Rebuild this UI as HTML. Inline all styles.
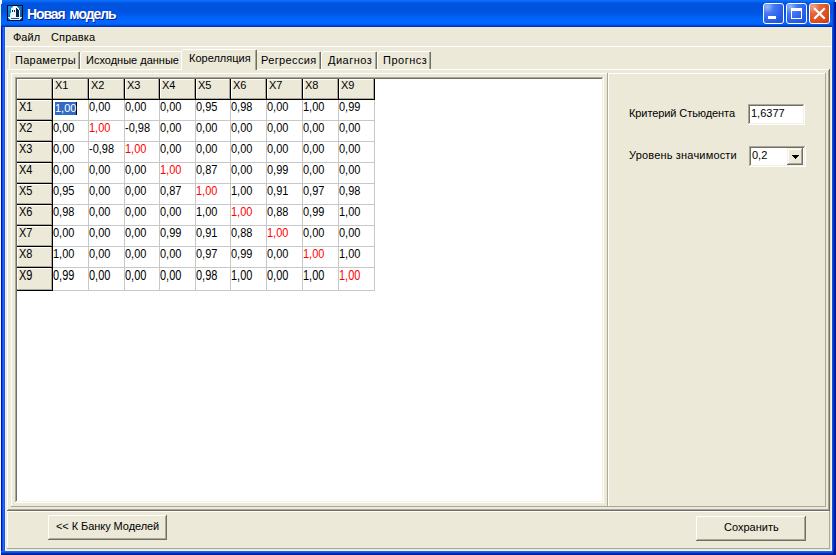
<!DOCTYPE html>
<html><head><meta charset="utf-8"><style>
html,body{margin:0;padding:0;}
body{width:836px;height:555px;position:relative;overflow:hidden;background:#fff;}
div{position:absolute;}
.t{font:11px "Liberation Sans",sans-serif;line-height:13px;color:#000;white-space:pre;}
</style></head><body>
<div style="left:1px;top:0px;width:835px;height:27px;background:linear-gradient(to bottom,#0C72FA 0px,#0A6CF6 1px,#0460EE 2px,#0056E4 3px,#0053DF 5px,#0053DF 11px,#0058E8 14px,#0060F6 17px,#0066FF 20px,#0066FF 23px,#0062FA 24px,#0058EE 25px,#0036BC 26px,#002EAC 27px)"></div>
<div style="left:0px;top:0px;width:2px;height:4px;background:#F4F7FE"></div>
<div style="left:835px;top:0px;width:1px;height:2px;background:#F4F7FE"></div>
<div style="left:0px;top:4px;width:1px;height:551px;background:#F4F7FE"></div>
<div style="left:1px;top:27px;width:4px;height:528px;background:linear-gradient(to right,#0010D8 0px,#0010D8 1px,#0A48EC 1px,#0A48EC 2px,#1A70FA 2px,#1A70FA 3px,#0A58F0 3px,#0A58F0 4px)"></div>
<div style="left:1px;top:551px;width:835px;height:4px;background:linear-gradient(to bottom,#1464FA 0px,#1464FA 1px,#0850EE 1px,#0850EE 2px,#0030B8 2px,#001C90 4px)"></div>
<div style="left:832px;top:2px;width:4px;height:549px;background:linear-gradient(to right,#0852F0 0px,#0852F0 1px,#0040D0 1px,#0040D0 2px,#001EA0 2px,#001490 4px)"></div>
<div style="left:833px;top:551px;width:3px;height:4px;background:#001890"></div>
<div style="left:5px;top:27px;width:827px;height:524px;background:#ECE9D8"></div>
<div style="left:5px;top:27px;width:1px;height:524px;background:#F8F0D8"></div>
<div style="left:831px;top:27px;width:1px;height:524px;background:#FBF4DC"></div>
<div style="left:5px;top:550px;width:827px;height:1px;background:#FBF4DC"></div>
<svg style="position:absolute;left:7px;top:5px" width="16" height="16" viewBox="0 0 16 16" shape-rendering="crispEdges">
<defs><linearGradient id="ig" x1="0" y1="0" x2="1" y2="1"><stop offset="0" stop-color="#13A0EA"/><stop offset="0.6" stop-color="#0A6CB4"/><stop offset="1" stop-color="#034A80"/></linearGradient></defs>
<rect x="0" y="0" width="16" height="16" fill="#000A14"/>
<rect x="1" y="1" width="14" height="14" fill="url(#ig)"/>
<rect x="4" y="3" width="5" height="10" fill="#F2F6FA"/>
<rect x="3" y="8" width="1" height="5" fill="#DCE6EE"/>
<rect x="6" y="1" width="3" height="2" fill="#F6FAFE"/>
<rect x="5" y="2" width="1" height="1" fill="#C8DCEC"/>
<rect x="9" y="1" width="1" height="2" fill="#F6FAFE"/>
<rect x="9" y="3" width="3" height="9" fill="#04264A"/>
<rect x="10" y="2" width="1" height="2" fill="#E8F2FA"/>
<rect x="11" y="3" width="1" height="2" fill="#E8F2FA"/>
<rect x="12" y="5" width="1" height="7" fill="#E8F2FA"/>
<rect x="5" y="5" width="1" height="2" fill="#18283A"/><rect x="7" y="5" width="1" height="2" fill="#18283A"/>
<rect x="1" y="12" width="14" height="1" fill="#EEF4FA"/>
<rect x="2" y="13" width="2" height="1" fill="#EEF4FA"/>
<rect x="4" y="13" width="8" height="1" fill="#0A5A98"/>
<rect x="12" y="13" width="2" height="1" fill="#EEF4FA"/>
<rect x="3" y="14" width="10" height="1" fill="#EEF4FA"/>
</svg>
<div class="t" style="left:27px;top:6px;font:bold 14px 'Liberation Sans',sans-serif;line-height:16px;color:#fff;letter-spacing:-1.1px;word-spacing:2px;text-shadow:1px 1px 0 #0A1E8C">Новая модель</div>
<div style="left:763px;top:3px;width:21px;height:21px;background:radial-gradient(circle at 18% 15%,#9DB9FA 0%,#4677F2 30%,#2A5FEA 65%,#1C4CD8 100%);border:1px solid #fff;box-sizing:border-box;border-radius:3px"></div>
<div style="left:786px;top:3px;width:21px;height:21px;background:radial-gradient(circle at 18% 15%,#9DB9FA 0%,#4677F2 30%,#2A5FEA 65%,#1C4CD8 100%);border:1px solid #fff;box-sizing:border-box;border-radius:3px"></div>
<div style="left:809px;top:3px;width:21px;height:21px;background:radial-gradient(circle at 18% 15%,#F4A886 0%,#E6643A 30%,#DD4E20 65%,#C23C12 100%);border:1px solid #fff;box-sizing:border-box;border-radius:3px"></div>
<div style="left:768px;top:16px;width:8px;height:3px;background:#fff"></div>
<div style="left:791px;top:8px;width:11px;height:11px;border:1px solid #fff;border-top-width:3px;box-sizing:border-box"></div>
<svg style="position:absolute;left:809px;top:3px" width="21" height="21"><path d="M6 6L15 15M15 6L6 15" stroke="#fff" stroke-width="2.2" stroke-linecap="square"/></svg>
<div class="t" style="left:13px;top:31px;">Файл</div>
<div class="t" style="left:51px;top:31px;letter-spacing:0.15px">Справка</div>
<div style="left:5px;top:46px;width:827px;height:1px;background:#FFFFFF"></div>
<div style="left:7px;top:69px;width:823px;height:1px;background:#FFFFFF"></div>
<div style="left:7px;top:69px;width:1px;height:442px;background:#FFFFFF"></div>
<div style="left:828px;top:70px;width:1px;height:440px;background:#ACA899"></div>
<div style="left:829px;top:69px;width:1px;height:442px;background:#716F64"></div>
<div style="left:8px;top:509px;width:821px;height:1px;background:#ACA899"></div>
<div style="left:7px;top:510px;width:823px;height:1px;background:#716F64"></div>
<div style="left:10px;top:52px;width:69px;height:17px;background:#ECE9D8"></div>
<div style="left:11px;top:51px;width:68px;height:1px;background:#FFFFFF"></div>
<div style="left:10px;top:52px;width:1px;height:1px;background:#FFFFFF"></div>
<div style="left:9px;top:53px;width:1px;height:16px;background:#FFFFFF"></div>
<div style="left:78px;top:52px;width:1px;height:17px;background:#ACA899"></div>
<div style="left:79px;top:52px;width:1px;height:17px;background:#716F64"></div>
<div class="t" style="left:15px;top:54px;letter-spacing:0.25px">Параметры</div>
<div style="left:81px;top:52px;width:101px;height:17px;background:#ECE9D8"></div>
<div style="left:82px;top:51px;width:100px;height:1px;background:#FFFFFF"></div>
<div style="left:81px;top:52px;width:1px;height:1px;background:#FFFFFF"></div>
<div style="left:80px;top:53px;width:1px;height:16px;background:#FFFFFF"></div>
<div style="left:181px;top:52px;width:1px;height:17px;background:#ACA899"></div>
<div style="left:182px;top:52px;width:1px;height:17px;background:#716F64"></div>
<div class="t" style="left:86px;top:54px;letter-spacing:0px">Исходные данные</div>
<div style="left:255px;top:52px;width:65px;height:17px;background:#ECE9D8"></div>
<div style="left:256px;top:51px;width:64px;height:1px;background:#FFFFFF"></div>
<div style="left:255px;top:52px;width:1px;height:1px;background:#FFFFFF"></div>
<div style="left:254px;top:53px;width:1px;height:16px;background:#FFFFFF"></div>
<div style="left:319px;top:52px;width:1px;height:17px;background:#ACA899"></div>
<div style="left:320px;top:52px;width:1px;height:17px;background:#716F64"></div>
<div class="t" style="left:261px;top:54px;letter-spacing:0.375px">Регрессия</div>
<div style="left:322px;top:52px;width:54px;height:17px;background:#ECE9D8"></div>
<div style="left:323px;top:51px;width:53px;height:1px;background:#FFFFFF"></div>
<div style="left:322px;top:52px;width:1px;height:1px;background:#FFFFFF"></div>
<div style="left:321px;top:53px;width:1px;height:16px;background:#FFFFFF"></div>
<div style="left:375px;top:52px;width:1px;height:17px;background:#ACA899"></div>
<div style="left:376px;top:52px;width:1px;height:17px;background:#716F64"></div>
<div class="t" style="left:328px;top:54px;letter-spacing:0.5px">Диагноз</div>
<div style="left:378px;top:52px;width:52px;height:17px;background:#ECE9D8"></div>
<div style="left:379px;top:51px;width:51px;height:1px;background:#FFFFFF"></div>
<div style="left:378px;top:52px;width:1px;height:1px;background:#FFFFFF"></div>
<div style="left:377px;top:53px;width:1px;height:16px;background:#FFFFFF"></div>
<div style="left:429px;top:52px;width:1px;height:17px;background:#ACA899"></div>
<div style="left:430px;top:52px;width:1px;height:17px;background:#716F64"></div>
<div class="t" style="left:383px;top:54px;letter-spacing:0.5px">Прогнсз</div>
<div style="left:182px;top:50px;width:74px;height:20px;background:#ECE9D8"></div>
<div style="left:183px;top:49px;width:73px;height:1px;background:#FFFFFF"></div>
<div style="left:182px;top:50px;width:1px;height:1px;background:#FFFFFF"></div>
<div style="left:181px;top:51px;width:1px;height:19px;background:#FFFFFF"></div>
<div style="left:255px;top:50px;width:1px;height:20px;background:#ACA899"></div>
<div style="left:256px;top:50px;width:1px;height:20px;background:#716F64"></div>
<div class="t" style="left:189px;top:52px;letter-spacing:0px">Корелляция</div>
<div style="left:182px;top:69px;width:73px;height:1px;background:#ECE9D8"></div>
<div style="left:11px;top:73px;width:597px;height:1px;background:#FFFFFF"></div>
<div style="left:11px;top:73px;width:1px;height:434px;background:#FFFFFF"></div>
<div style="left:11px;top:506px;width:597px;height:1px;background:#ACA899"></div>
<div style="left:607px;top:73px;width:1px;height:434px;background:#ACA899"></div>
<div style="left:608px;top:73px;width:218px;height:1px;background:#FFFFFF"></div>
<div style="left:608px;top:73px;width:1px;height:434px;background:#FFFFFF"></div>
<div style="left:608px;top:506px;width:218px;height:1px;background:#ACA899"></div>
<div style="left:825px;top:73px;width:1px;height:434px;background:#ACA899"></div>
<div style="left:15px;top:77px;width:589px;height:1px;background:#ACA899"></div>
<div style="left:15px;top:77px;width:1px;height:426px;background:#ACA899"></div>
<div style="left:16px;top:78px;width:587px;height:1px;background:#716F64"></div>
<div style="left:16px;top:78px;width:1px;height:424px;background:#716F64"></div>
<div style="left:16px;top:501px;width:587px;height:1px;background:#F1EFE2"></div>
<div style="left:602px;top:78px;width:1px;height:424px;background:#F1EFE2"></div>
<div style="left:15px;top:502px;width:589px;height:1px;background:#FFFFFF"></div>
<div style="left:603px;top:77px;width:1px;height:426px;background:#FFFFFF"></div>
<div style="left:17px;top:79px;width:585px;height:422px;background:#fff"></div>
<div style="left:53px;top:120px;width:322px;height:1px;background:#C8C8C8"></div>
<div style="left:53px;top:141px;width:322px;height:1px;background:#C8C8C8"></div>
<div style="left:53px;top:162px;width:322px;height:1px;background:#C8C8C8"></div>
<div style="left:53px;top:183px;width:322px;height:1px;background:#C8C8C8"></div>
<div style="left:53px;top:204px;width:322px;height:1px;background:#C8C8C8"></div>
<div style="left:53px;top:225px;width:322px;height:1px;background:#C8C8C8"></div>
<div style="left:53px;top:246px;width:322px;height:1px;background:#C8C8C8"></div>
<div style="left:53px;top:267px;width:322px;height:1px;background:#C8C8C8"></div>
<div style="left:53px;top:290px;width:322px;height:1px;background:#C8C8C8"></div>
<div style="left:88px;top:100px;width:1px;height:191px;background:#C8C8C8"></div>
<div style="left:124px;top:100px;width:1px;height:191px;background:#C8C8C8"></div>
<div style="left:159px;top:100px;width:1px;height:191px;background:#C8C8C8"></div>
<div style="left:195px;top:100px;width:1px;height:191px;background:#C8C8C8"></div>
<div style="left:230px;top:100px;width:1px;height:191px;background:#C8C8C8"></div>
<div style="left:266px;top:100px;width:1px;height:191px;background:#C8C8C8"></div>
<div style="left:302px;top:100px;width:1px;height:191px;background:#C8C8C8"></div>
<div style="left:338px;top:100px;width:1px;height:191px;background:#C8C8C8"></div>
<div style="left:374px;top:100px;width:1px;height:191px;background:#C8C8C8"></div>
<div style="left:17px;top:79px;width:35px;height:20px;background:#ECE9D8"></div>
<div style="left:17px;top:79px;width:35px;height:1px;background:#FFFFFF"></div>
<div style="left:17px;top:79px;width:1px;height:20px;background:#FFFFFF"></div>
<div style="left:17px;top:98px;width:35px;height:1px;background:#ACA899"></div>
<div style="left:51px;top:79px;width:1px;height:20px;background:#ACA899"></div>
<div style="left:53px;top:79px;width:35px;height:20px;background:#ECE9D8"></div>
<div style="left:53px;top:79px;width:35px;height:1px;background:#FFFFFF"></div>
<div style="left:53px;top:79px;width:1px;height:20px;background:#FFFFFF"></div>
<div style="left:53px;top:98px;width:35px;height:1px;background:#ACA899"></div>
<div style="left:87px;top:79px;width:1px;height:20px;background:#ACA899"></div>
<div style="left:89px;top:79px;width:35px;height:20px;background:#ECE9D8"></div>
<div style="left:89px;top:79px;width:35px;height:1px;background:#FFFFFF"></div>
<div style="left:89px;top:79px;width:1px;height:20px;background:#FFFFFF"></div>
<div style="left:89px;top:98px;width:35px;height:1px;background:#ACA899"></div>
<div style="left:123px;top:79px;width:1px;height:20px;background:#ACA899"></div>
<div style="left:125px;top:79px;width:34px;height:20px;background:#ECE9D8"></div>
<div style="left:125px;top:79px;width:34px;height:1px;background:#FFFFFF"></div>
<div style="left:125px;top:79px;width:1px;height:20px;background:#FFFFFF"></div>
<div style="left:125px;top:98px;width:34px;height:1px;background:#ACA899"></div>
<div style="left:158px;top:79px;width:1px;height:20px;background:#ACA899"></div>
<div style="left:160px;top:79px;width:35px;height:20px;background:#ECE9D8"></div>
<div style="left:160px;top:79px;width:35px;height:1px;background:#FFFFFF"></div>
<div style="left:160px;top:79px;width:1px;height:20px;background:#FFFFFF"></div>
<div style="left:160px;top:98px;width:35px;height:1px;background:#ACA899"></div>
<div style="left:194px;top:79px;width:1px;height:20px;background:#ACA899"></div>
<div style="left:196px;top:79px;width:34px;height:20px;background:#ECE9D8"></div>
<div style="left:196px;top:79px;width:34px;height:1px;background:#FFFFFF"></div>
<div style="left:196px;top:79px;width:1px;height:20px;background:#FFFFFF"></div>
<div style="left:196px;top:98px;width:34px;height:1px;background:#ACA899"></div>
<div style="left:229px;top:79px;width:1px;height:20px;background:#ACA899"></div>
<div style="left:231px;top:79px;width:35px;height:20px;background:#ECE9D8"></div>
<div style="left:231px;top:79px;width:35px;height:1px;background:#FFFFFF"></div>
<div style="left:231px;top:79px;width:1px;height:20px;background:#FFFFFF"></div>
<div style="left:231px;top:98px;width:35px;height:1px;background:#ACA899"></div>
<div style="left:265px;top:79px;width:1px;height:20px;background:#ACA899"></div>
<div style="left:267px;top:79px;width:35px;height:20px;background:#ECE9D8"></div>
<div style="left:267px;top:79px;width:35px;height:1px;background:#FFFFFF"></div>
<div style="left:267px;top:79px;width:1px;height:20px;background:#FFFFFF"></div>
<div style="left:267px;top:98px;width:35px;height:1px;background:#ACA899"></div>
<div style="left:301px;top:79px;width:1px;height:20px;background:#ACA899"></div>
<div style="left:303px;top:79px;width:35px;height:20px;background:#ECE9D8"></div>
<div style="left:303px;top:79px;width:35px;height:1px;background:#FFFFFF"></div>
<div style="left:303px;top:79px;width:1px;height:20px;background:#FFFFFF"></div>
<div style="left:303px;top:98px;width:35px;height:1px;background:#ACA899"></div>
<div style="left:337px;top:79px;width:1px;height:20px;background:#ACA899"></div>
<div style="left:339px;top:79px;width:35px;height:20px;background:#ECE9D8"></div>
<div style="left:339px;top:79px;width:35px;height:1px;background:#FFFFFF"></div>
<div style="left:339px;top:79px;width:1px;height:20px;background:#FFFFFF"></div>
<div style="left:339px;top:98px;width:35px;height:1px;background:#ACA899"></div>
<div style="left:373px;top:79px;width:1px;height:20px;background:#ACA899"></div>
<div style="left:17px;top:100px;width:35px;height:20px;background:#ECE9D8"></div>
<div style="left:17px;top:100px;width:35px;height:1px;background:#FFFFFF"></div>
<div style="left:17px;top:100px;width:1px;height:20px;background:#FFFFFF"></div>
<div style="left:17px;top:119px;width:35px;height:1px;background:#ACA899"></div>
<div style="left:51px;top:100px;width:1px;height:20px;background:#ACA899"></div>
<div style="left:17px;top:121px;width:35px;height:20px;background:#ECE9D8"></div>
<div style="left:17px;top:121px;width:35px;height:1px;background:#FFFFFF"></div>
<div style="left:17px;top:121px;width:1px;height:20px;background:#FFFFFF"></div>
<div style="left:17px;top:140px;width:35px;height:1px;background:#ACA899"></div>
<div style="left:51px;top:121px;width:1px;height:20px;background:#ACA899"></div>
<div style="left:17px;top:142px;width:35px;height:20px;background:#ECE9D8"></div>
<div style="left:17px;top:142px;width:35px;height:1px;background:#FFFFFF"></div>
<div style="left:17px;top:142px;width:1px;height:20px;background:#FFFFFF"></div>
<div style="left:17px;top:161px;width:35px;height:1px;background:#ACA899"></div>
<div style="left:51px;top:142px;width:1px;height:20px;background:#ACA899"></div>
<div style="left:17px;top:163px;width:35px;height:20px;background:#ECE9D8"></div>
<div style="left:17px;top:163px;width:35px;height:1px;background:#FFFFFF"></div>
<div style="left:17px;top:163px;width:1px;height:20px;background:#FFFFFF"></div>
<div style="left:17px;top:182px;width:35px;height:1px;background:#ACA899"></div>
<div style="left:51px;top:163px;width:1px;height:20px;background:#ACA899"></div>
<div style="left:17px;top:184px;width:35px;height:20px;background:#ECE9D8"></div>
<div style="left:17px;top:184px;width:35px;height:1px;background:#FFFFFF"></div>
<div style="left:17px;top:184px;width:1px;height:20px;background:#FFFFFF"></div>
<div style="left:17px;top:203px;width:35px;height:1px;background:#ACA899"></div>
<div style="left:51px;top:184px;width:1px;height:20px;background:#ACA899"></div>
<div style="left:17px;top:205px;width:35px;height:20px;background:#ECE9D8"></div>
<div style="left:17px;top:205px;width:35px;height:1px;background:#FFFFFF"></div>
<div style="left:17px;top:205px;width:1px;height:20px;background:#FFFFFF"></div>
<div style="left:17px;top:224px;width:35px;height:1px;background:#ACA899"></div>
<div style="left:51px;top:205px;width:1px;height:20px;background:#ACA899"></div>
<div style="left:17px;top:226px;width:35px;height:20px;background:#ECE9D8"></div>
<div style="left:17px;top:226px;width:35px;height:1px;background:#FFFFFF"></div>
<div style="left:17px;top:226px;width:1px;height:20px;background:#FFFFFF"></div>
<div style="left:17px;top:245px;width:35px;height:1px;background:#ACA899"></div>
<div style="left:51px;top:226px;width:1px;height:20px;background:#ACA899"></div>
<div style="left:17px;top:247px;width:35px;height:20px;background:#ECE9D8"></div>
<div style="left:17px;top:247px;width:35px;height:1px;background:#FFFFFF"></div>
<div style="left:17px;top:247px;width:1px;height:20px;background:#FFFFFF"></div>
<div style="left:17px;top:266px;width:35px;height:1px;background:#ACA899"></div>
<div style="left:51px;top:247px;width:1px;height:20px;background:#ACA899"></div>
<div style="left:17px;top:268px;width:35px;height:22px;background:#ECE9D8"></div>
<div style="left:17px;top:268px;width:35px;height:1px;background:#FFFFFF"></div>
<div style="left:17px;top:268px;width:1px;height:22px;background:#FFFFFF"></div>
<div style="left:17px;top:289px;width:35px;height:1px;background:#ACA899"></div>
<div style="left:51px;top:268px;width:1px;height:22px;background:#ACA899"></div>
<div style="left:17px;top:99px;width:358px;height:1px;background:#000"></div>
<div style="left:52px;top:79px;width:1px;height:212px;background:#000"></div>
<div style="left:88px;top:79px;width:1px;height:21px;background:#000"></div>
<div style="left:124px;top:79px;width:1px;height:21px;background:#000"></div>
<div style="left:159px;top:79px;width:1px;height:21px;background:#000"></div>
<div style="left:195px;top:79px;width:1px;height:21px;background:#000"></div>
<div style="left:230px;top:79px;width:1px;height:21px;background:#000"></div>
<div style="left:266px;top:79px;width:1px;height:21px;background:#000"></div>
<div style="left:302px;top:79px;width:1px;height:21px;background:#000"></div>
<div style="left:338px;top:79px;width:1px;height:21px;background:#000"></div>
<div style="left:374px;top:79px;width:1px;height:21px;background:#000"></div>
<div style="left:17px;top:120px;width:36px;height:1px;background:#000"></div>
<div style="left:17px;top:141px;width:36px;height:1px;background:#000"></div>
<div style="left:17px;top:162px;width:36px;height:1px;background:#000"></div>
<div style="left:17px;top:183px;width:36px;height:1px;background:#000"></div>
<div style="left:17px;top:204px;width:36px;height:1px;background:#000"></div>
<div style="left:17px;top:225px;width:36px;height:1px;background:#000"></div>
<div style="left:17px;top:246px;width:36px;height:1px;background:#000"></div>
<div style="left:17px;top:267px;width:36px;height:1px;background:#000"></div>
<div style="left:17px;top:290px;width:36px;height:1px;background:#000"></div>
<div class="t" style="left:55px;top:79px;">X1</div>
<div class="t" style="left:91px;top:79px;">X2</div>
<div class="t" style="left:127px;top:79px;">X3</div>
<div class="t" style="left:162px;top:79px;">X4</div>
<div class="t" style="left:198px;top:79px;">X5</div>
<div class="t" style="left:233px;top:79px;">X6</div>
<div class="t" style="left:269px;top:79px;">X7</div>
<div class="t" style="left:305px;top:79px;">X8</div>
<div class="t" style="left:341px;top:79px;">X9</div>
<div class="t" style="left:19px;top:100px;transform:scaleY(1.12);transform-origin:0 2px">X1</div>
<div class="t" style="left:19px;top:121px;transform:scaleY(1.12);transform-origin:0 2px">X2</div>
<div class="t" style="left:19px;top:142px;transform:scaleY(1.12);transform-origin:0 2px">X3</div>
<div class="t" style="left:19px;top:163px;transform:scaleY(1.12);transform-origin:0 2px">X4</div>
<div class="t" style="left:19px;top:184px;transform:scaleY(1.12);transform-origin:0 2px">X5</div>
<div class="t" style="left:19px;top:205px;transform:scaleY(1.12);transform-origin:0 2px">X6</div>
<div class="t" style="left:19px;top:226px;transform:scaleY(1.12);transform-origin:0 2px">X7</div>
<div class="t" style="left:19px;top:247px;transform:scaleY(1.12);transform-origin:0 2px">X8</div>
<div class="t" style="left:19px;top:267px;transform:scaleY(1.36);transform-origin:0 3px">X9</div>
<div style="left:55px;top:102px;width:21px;height:13px;background:#316AC5"></div>
<div style="left:76px;top:102px;width:1px;height:13px;background:#000"></div>
<div class="t" style="left:55px;top:102px;color:#fff;">1,00</div>
<div class="t" style="left:89px;top:100px;transform:scaleY(1.12);transform-origin:0 2px;width:34px;overflow:hidden">0,00</div>
<div class="t" style="left:125px;top:100px;transform:scaleY(1.12);transform-origin:0 2px;width:33px;overflow:hidden">0,00</div>
<div class="t" style="left:160px;top:100px;transform:scaleY(1.12);transform-origin:0 2px;width:34px;overflow:hidden">0,00</div>
<div class="t" style="left:196px;top:100px;transform:scaleY(1.12);transform-origin:0 2px;width:33px;overflow:hidden">0,95</div>
<div class="t" style="left:231px;top:100px;transform:scaleY(1.12);transform-origin:0 2px;width:34px;overflow:hidden">0,98</div>
<div class="t" style="left:267px;top:100px;transform:scaleY(1.12);transform-origin:0 2px;width:34px;overflow:hidden">0,00</div>
<div class="t" style="left:303px;top:100px;transform:scaleY(1.12);transform-origin:0 2px;width:34px;overflow:hidden">1,00</div>
<div class="t" style="left:339px;top:100px;transform:scaleY(1.12);transform-origin:0 2px;width:34px;overflow:hidden">0,99</div>
<div class="t" style="left:53px;top:121px;transform:scaleY(1.12);transform-origin:0 2px;width:34px;overflow:hidden">0,00</div>
<div class="t" style="left:89px;top:121px;color:#FF0000;transform:scaleY(1.12);transform-origin:0 2px;width:34px;overflow:hidden">1,00</div>
<div class="t" style="left:125px;top:121px;transform:scaleY(1.12);transform-origin:0 2px;width:33px;overflow:hidden">-0,98</div>
<div class="t" style="left:160px;top:121px;transform:scaleY(1.12);transform-origin:0 2px;width:34px;overflow:hidden">0,00</div>
<div class="t" style="left:196px;top:121px;transform:scaleY(1.12);transform-origin:0 2px;width:33px;overflow:hidden">0,00</div>
<div class="t" style="left:231px;top:121px;transform:scaleY(1.12);transform-origin:0 2px;width:34px;overflow:hidden">0,00</div>
<div class="t" style="left:267px;top:121px;transform:scaleY(1.12);transform-origin:0 2px;width:34px;overflow:hidden">0,00</div>
<div class="t" style="left:303px;top:121px;transform:scaleY(1.12);transform-origin:0 2px;width:34px;overflow:hidden">0,00</div>
<div class="t" style="left:339px;top:121px;transform:scaleY(1.12);transform-origin:0 2px;width:34px;overflow:hidden">0,00</div>
<div class="t" style="left:53px;top:142px;transform:scaleY(1.12);transform-origin:0 2px;width:34px;overflow:hidden">0,00</div>
<div class="t" style="left:89px;top:142px;transform:scaleY(1.12);transform-origin:0 2px;width:34px;overflow:hidden">-0,98</div>
<div class="t" style="left:125px;top:142px;color:#FF0000;transform:scaleY(1.12);transform-origin:0 2px;width:33px;overflow:hidden">1,00</div>
<div class="t" style="left:160px;top:142px;transform:scaleY(1.12);transform-origin:0 2px;width:34px;overflow:hidden">0,00</div>
<div class="t" style="left:196px;top:142px;transform:scaleY(1.12);transform-origin:0 2px;width:33px;overflow:hidden">0,00</div>
<div class="t" style="left:231px;top:142px;transform:scaleY(1.12);transform-origin:0 2px;width:34px;overflow:hidden">0,00</div>
<div class="t" style="left:267px;top:142px;transform:scaleY(1.12);transform-origin:0 2px;width:34px;overflow:hidden">0,00</div>
<div class="t" style="left:303px;top:142px;transform:scaleY(1.12);transform-origin:0 2px;width:34px;overflow:hidden">0,00</div>
<div class="t" style="left:339px;top:142px;transform:scaleY(1.12);transform-origin:0 2px;width:34px;overflow:hidden">0,00</div>
<div class="t" style="left:53px;top:163px;transform:scaleY(1.12);transform-origin:0 2px;width:34px;overflow:hidden">0,00</div>
<div class="t" style="left:89px;top:163px;transform:scaleY(1.12);transform-origin:0 2px;width:34px;overflow:hidden">0,00</div>
<div class="t" style="left:125px;top:163px;transform:scaleY(1.12);transform-origin:0 2px;width:33px;overflow:hidden">0,00</div>
<div class="t" style="left:160px;top:163px;color:#FF0000;transform:scaleY(1.12);transform-origin:0 2px;width:34px;overflow:hidden">1,00</div>
<div class="t" style="left:196px;top:163px;transform:scaleY(1.12);transform-origin:0 2px;width:33px;overflow:hidden">0,87</div>
<div class="t" style="left:231px;top:163px;transform:scaleY(1.12);transform-origin:0 2px;width:34px;overflow:hidden">0,00</div>
<div class="t" style="left:267px;top:163px;transform:scaleY(1.12);transform-origin:0 2px;width:34px;overflow:hidden">0,99</div>
<div class="t" style="left:303px;top:163px;transform:scaleY(1.12);transform-origin:0 2px;width:34px;overflow:hidden">0,00</div>
<div class="t" style="left:339px;top:163px;transform:scaleY(1.12);transform-origin:0 2px;width:34px;overflow:hidden">0,00</div>
<div class="t" style="left:53px;top:184px;transform:scaleY(1.12);transform-origin:0 2px;width:34px;overflow:hidden">0,95</div>
<div class="t" style="left:89px;top:184px;transform:scaleY(1.12);transform-origin:0 2px;width:34px;overflow:hidden">0,00</div>
<div class="t" style="left:125px;top:184px;transform:scaleY(1.12);transform-origin:0 2px;width:33px;overflow:hidden">0,00</div>
<div class="t" style="left:160px;top:184px;transform:scaleY(1.12);transform-origin:0 2px;width:34px;overflow:hidden">0,87</div>
<div class="t" style="left:196px;top:184px;color:#FF0000;transform:scaleY(1.12);transform-origin:0 2px;width:33px;overflow:hidden">1,00</div>
<div class="t" style="left:231px;top:184px;transform:scaleY(1.12);transform-origin:0 2px;width:34px;overflow:hidden">1,00</div>
<div class="t" style="left:267px;top:184px;transform:scaleY(1.12);transform-origin:0 2px;width:34px;overflow:hidden">0,91</div>
<div class="t" style="left:303px;top:184px;transform:scaleY(1.12);transform-origin:0 2px;width:34px;overflow:hidden">0,97</div>
<div class="t" style="left:339px;top:184px;transform:scaleY(1.12);transform-origin:0 2px;width:34px;overflow:hidden">0,98</div>
<div class="t" style="left:53px;top:205px;transform:scaleY(1.12);transform-origin:0 2px;width:34px;overflow:hidden">0,98</div>
<div class="t" style="left:89px;top:205px;transform:scaleY(1.12);transform-origin:0 2px;width:34px;overflow:hidden">0,00</div>
<div class="t" style="left:125px;top:205px;transform:scaleY(1.12);transform-origin:0 2px;width:33px;overflow:hidden">0,00</div>
<div class="t" style="left:160px;top:205px;transform:scaleY(1.12);transform-origin:0 2px;width:34px;overflow:hidden">0,00</div>
<div class="t" style="left:196px;top:205px;transform:scaleY(1.12);transform-origin:0 2px;width:33px;overflow:hidden">1,00</div>
<div class="t" style="left:231px;top:205px;color:#FF0000;transform:scaleY(1.12);transform-origin:0 2px;width:34px;overflow:hidden">1,00</div>
<div class="t" style="left:267px;top:205px;transform:scaleY(1.12);transform-origin:0 2px;width:34px;overflow:hidden">0,88</div>
<div class="t" style="left:303px;top:205px;transform:scaleY(1.12);transform-origin:0 2px;width:34px;overflow:hidden">0,99</div>
<div class="t" style="left:339px;top:205px;transform:scaleY(1.12);transform-origin:0 2px;width:34px;overflow:hidden">1,00</div>
<div class="t" style="left:53px;top:226px;transform:scaleY(1.12);transform-origin:0 2px;width:34px;overflow:hidden">0,00</div>
<div class="t" style="left:89px;top:226px;transform:scaleY(1.12);transform-origin:0 2px;width:34px;overflow:hidden">0,00</div>
<div class="t" style="left:125px;top:226px;transform:scaleY(1.12);transform-origin:0 2px;width:33px;overflow:hidden">0,00</div>
<div class="t" style="left:160px;top:226px;transform:scaleY(1.12);transform-origin:0 2px;width:34px;overflow:hidden">0,99</div>
<div class="t" style="left:196px;top:226px;transform:scaleY(1.12);transform-origin:0 2px;width:33px;overflow:hidden">0,91</div>
<div class="t" style="left:231px;top:226px;transform:scaleY(1.12);transform-origin:0 2px;width:34px;overflow:hidden">0,88</div>
<div class="t" style="left:267px;top:226px;color:#FF0000;transform:scaleY(1.12);transform-origin:0 2px;width:34px;overflow:hidden">1,00</div>
<div class="t" style="left:303px;top:226px;transform:scaleY(1.12);transform-origin:0 2px;width:34px;overflow:hidden">0,00</div>
<div class="t" style="left:339px;top:226px;transform:scaleY(1.12);transform-origin:0 2px;width:34px;overflow:hidden">0,00</div>
<div class="t" style="left:53px;top:247px;transform:scaleY(1.12);transform-origin:0 2px;width:34px;overflow:hidden">1,00</div>
<div class="t" style="left:89px;top:247px;transform:scaleY(1.12);transform-origin:0 2px;width:34px;overflow:hidden">0,00</div>
<div class="t" style="left:125px;top:247px;transform:scaleY(1.12);transform-origin:0 2px;width:33px;overflow:hidden">0,00</div>
<div class="t" style="left:160px;top:247px;transform:scaleY(1.12);transform-origin:0 2px;width:34px;overflow:hidden">0,00</div>
<div class="t" style="left:196px;top:247px;transform:scaleY(1.12);transform-origin:0 2px;width:33px;overflow:hidden">0,97</div>
<div class="t" style="left:231px;top:247px;transform:scaleY(1.12);transform-origin:0 2px;width:34px;overflow:hidden">0,99</div>
<div class="t" style="left:267px;top:247px;transform:scaleY(1.12);transform-origin:0 2px;width:34px;overflow:hidden">0,00</div>
<div class="t" style="left:303px;top:247px;color:#FF0000;transform:scaleY(1.12);transform-origin:0 2px;width:34px;overflow:hidden">1,00</div>
<div class="t" style="left:339px;top:247px;transform:scaleY(1.12);transform-origin:0 2px;width:34px;overflow:hidden">1,00</div>
<div class="t" style="left:53px;top:267px;transform:scaleY(1.36);transform-origin:0 3px;width:34px;overflow:hidden">0,99</div>
<div class="t" style="left:89px;top:267px;transform:scaleY(1.36);transform-origin:0 3px;width:34px;overflow:hidden">0,00</div>
<div class="t" style="left:125px;top:267px;transform:scaleY(1.36);transform-origin:0 3px;width:33px;overflow:hidden">0,00</div>
<div class="t" style="left:160px;top:267px;transform:scaleY(1.36);transform-origin:0 3px;width:34px;overflow:hidden">0,00</div>
<div class="t" style="left:196px;top:267px;transform:scaleY(1.36);transform-origin:0 3px;width:33px;overflow:hidden">0,98</div>
<div class="t" style="left:231px;top:267px;transform:scaleY(1.36);transform-origin:0 3px;width:34px;overflow:hidden">1,00</div>
<div class="t" style="left:267px;top:267px;transform:scaleY(1.36);transform-origin:0 3px;width:34px;overflow:hidden">0,00</div>
<div class="t" style="left:303px;top:267px;transform:scaleY(1.36);transform-origin:0 3px;width:34px;overflow:hidden">1,00</div>
<div class="t" style="left:339px;top:267px;color:#FF0000;transform:scaleY(1.36);transform-origin:0 3px;width:34px;overflow:hidden">1,00</div>
<div class="t" style="left:629px;top:107px;letter-spacing:-0.09px">Критерий Стьюдента</div>
<div style="left:748px;top:104px;width:57px;height:1px;background:#ACA899"></div>
<div style="left:748px;top:104px;width:1px;height:21px;background:#ACA899"></div>
<div style="left:749px;top:105px;width:55px;height:1px;background:#716F64"></div>
<div style="left:749px;top:105px;width:1px;height:19px;background:#716F64"></div>
<div style="left:749px;top:123px;width:55px;height:1px;background:#F1EFE2"></div>
<div style="left:803px;top:105px;width:1px;height:19px;background:#F1EFE2"></div>
<div style="left:748px;top:124px;width:57px;height:1px;background:#FFFFFF"></div>
<div style="left:804px;top:104px;width:1px;height:21px;background:#FFFFFF"></div>
<div style="left:750px;top:106px;width:53px;height:17px;background:#fff"></div>
<div class="t" style="left:751px;top:107px;">1,6377</div>
<div class="t" style="left:629px;top:149px;letter-spacing:0.18px">Уровень значимости</div>
<div style="left:749px;top:146px;width:57px;height:1px;background:#ACA899"></div>
<div style="left:749px;top:146px;width:1px;height:21px;background:#ACA899"></div>
<div style="left:750px;top:147px;width:55px;height:1px;background:#716F64"></div>
<div style="left:750px;top:147px;width:1px;height:19px;background:#716F64"></div>
<div style="left:750px;top:165px;width:55px;height:1px;background:#F1EFE2"></div>
<div style="left:804px;top:147px;width:1px;height:19px;background:#F1EFE2"></div>
<div style="left:749px;top:166px;width:57px;height:1px;background:#FFFFFF"></div>
<div style="left:805px;top:146px;width:1px;height:21px;background:#FFFFFF"></div>
<div style="left:751px;top:148px;width:53px;height:17px;background:#fff"></div>
<div class="t" style="left:752px;top:149px;">0,2</div>
<div style="left:787px;top:148px;width:16px;height:17px;background:#ECE9D8"></div>
<div style="left:787px;top:148px;width:16px;height:1px;background:#F1EFE2"></div>
<div style="left:787px;top:148px;width:1px;height:17px;background:#F1EFE2"></div>
<div style="left:788px;top:149px;width:14px;height:1px;background:#FFFFFF"></div>
<div style="left:788px;top:149px;width:1px;height:15px;background:#FFFFFF"></div>
<div style="left:788px;top:163px;width:14px;height:1px;background:#ACA899"></div>
<div style="left:801px;top:149px;width:1px;height:15px;background:#ACA899"></div>
<div style="left:787px;top:164px;width:16px;height:1px;background:#716F64"></div>
<div style="left:802px;top:148px;width:1px;height:17px;background:#716F64"></div>
<svg style="position:absolute;left:792px;top:155px" width="7" height="4" shape-rendering="crispEdges"><path d="M0 0h7v1h-1v1h-1v1h-1v1h-1v-1h-1v-1h-1v-1h-1z" fill="#000"/></svg>
<div style="left:7px;top:511px;width:823px;height:1px;background:#FFFFFF"></div>
<div style="left:7px;top:511px;width:1px;height:38px;background:#FFFFFF"></div>
<div style="left:7px;top:548px;width:823px;height:1px;background:#ACA899"></div>
<div style="left:829px;top:511px;width:1px;height:38px;background:#ACA899"></div>
<div style="left:48px;top:515px;width:119px;height:25px;background:#ECE9D8"></div>
<div style="left:48px;top:515px;width:119px;height:1px;background:#FFFFFF"></div>
<div style="left:48px;top:515px;width:1px;height:25px;background:#FFFFFF"></div>
<div style="left:49px;top:538px;width:117px;height:1px;background:#ACA899"></div>
<div style="left:165px;top:516px;width:1px;height:23px;background:#ACA899"></div>
<div style="left:48px;top:539px;width:119px;height:1px;background:#716F64"></div>
<div style="left:166px;top:515px;width:1px;height:25px;background:#716F64"></div>
<div class="t" style="left:56px;top:520px;letter-spacing:-0.06px">&lt;&lt; К Банку Моделей</div>
<div style="left:696px;top:516px;width:110px;height:25px;background:#ECE9D8"></div>
<div style="left:696px;top:516px;width:110px;height:1px;background:#FFFFFF"></div>
<div style="left:696px;top:516px;width:1px;height:25px;background:#FFFFFF"></div>
<div style="left:697px;top:539px;width:108px;height:1px;background:#ACA899"></div>
<div style="left:804px;top:517px;width:1px;height:23px;background:#ACA899"></div>
<div style="left:696px;top:540px;width:110px;height:1px;background:#716F64"></div>
<div style="left:805px;top:516px;width:1px;height:25px;background:#716F64"></div>
<div class="t" style="left:724px;top:521px;letter-spacing:0px">Сохранить</div>
</body></html>
